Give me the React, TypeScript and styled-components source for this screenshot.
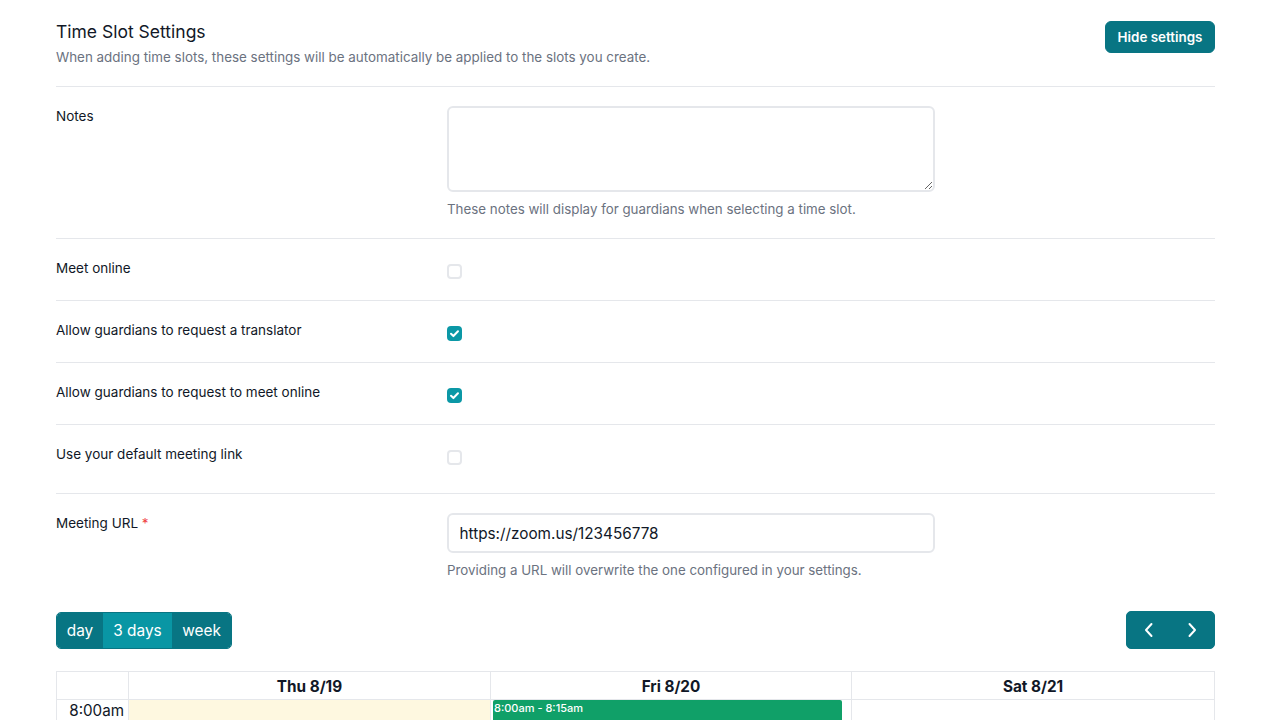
import React from 'react';
import styled, { createGlobalStyle } from 'styled-components';

const GlobalStyle = createGlobalStyle`
  html, body {
    margin: 0;
    padding: 0;
    height: 720px;
    overflow: hidden;
    background: #fff;
    font-family: Inter, "Liberation Sans", sans-serif;
    color: #111827;
  }
  * {
    box-sizing: border-box;
  }
`;

const App: React.FC<{}> = () => {
  return (
    <Page>
      <GlobalStyle />
      <Header>
        <div>
          <Title>Time Slot Settings</Title>
          <Subtitle>
            When adding time slots, these settings will be automatically be applied to the slots you
            create.
          </Subtitle>
        </div>
        <PrimaryButton>Hide settings</PrimaryButton>
      </Header>

      <Row $height={152}>
        <Label>Notes</Label>
        <div>
          <TextArea />
          <Help>These notes will display for guardians when selecting a time slot.</Help>
        </div>
      </Row>
      <CheckRow label="Meet online" checked={false} />
      <CheckRow label="Allow guardians to request a translator" checked />
      <CheckRow label="Allow guardians to request to meet online" checked />
      <CheckRow label="Use your default meeting link" checked={false} height={69} />
      <Row $height={118} $last>
        <Label>
          Meeting URL <Required>*</Required>
        </Label>
        <div>
          <TextInput defaultValue="https://zoom.us/123456778" />
          <Help>Providing a URL will overwrite the one configured in your settings.</Help>
        </div>
      </Row>

      <Toolbar>
        <ViewGroup>
          <ViewButton $width={46}>day</ViewButton>
          <ViewButton $width={69} $active>
            3 days
          </ViewButton>
          <ViewButton $width={59}>week</ViewButton>
        </ViewGroup>
        <NavGroup>
          <NavButton aria-label="Previous">
            <Chevron d="M10.5 3 L5 9 L10.5 15" />
          </NavButton>
          <NavButton aria-label="Next">
            <Chevron d="M5.5 3 L11 9 L5.5 15" />
          </NavButton>
        </NavGroup>
      </Toolbar>

      <Calendar>
        <thead>
          <tr>
            <CornerCell />
            <DayHead $width={362}>Thu 8/19</DayHead>
            <DayHead $width={361}>Fri 8/20</DayHead>
            <DayHead $width={363}>Sat 8/21</DayHead>
          </tr>
        </thead>
        <tbody>
          <tr>
            <TimeCell>8:00am</TimeCell>
            <SlotCell $today />
            <SlotCell>
              <Event>8:00am - 8:15am</Event>
            </SlotCell>
            <SlotCell />
          </tr>
        </tbody>
      </Calendar>
    </Page>
  );
};

const Chevron: React.FC<{ d: string }> = ({ d }) => (
  <svg width="16" height="18" viewBox="0 0 16 18" fill="none">
    <path d={d} stroke="#fff" strokeWidth="2" strokeLinecap="round" strokeLinejoin="round" />
  </svg>
);

const CheckRow: React.FC<{ label: string; checked: boolean; height?: number }> = ({
  label,
  checked,
  height = 62,
}) => (
  <Row $height={height}>
    <Label>{label}</Label>
    <CheckBox $checked={checked}>
      {checked && (
        <svg width="11" height="11" viewBox="0 0 12 12" fill="none">
          <path
            d="M2.2 6.3 L4.8 8.8 L9.8 3.6"
            stroke="#fff"
            strokeWidth="2.2"
            strokeLinecap="round"
            strokeLinejoin="round"
          />
        </svg>
      )}
    </CheckBox>
  </Row>
);

export default App;

const Page = styled.div`
  width: 1270px;
  height: 720px;
  overflow: hidden;
  padding: 21px 55px 0 56px;
`;

const Header = styled.div`
  display: flex;
  justify-content: space-between;
  align-items: flex-start;
  height: 66px;
  border-bottom: 1px solid #e5e7eb;
`;

const Title = styled.h3`
  margin: 0;
  font-size: 17.5px;
  line-height: 22px;
  font-weight: 400;
  color: #111827;
`;

const Subtitle = styled.p`
  margin: 4px 0 0;
  font-size: 13.4px;
  line-height: 20px;
  color: #6b7280;
`;

const PrimaryButton = styled.button`
  height: 32px;
  width: 110px;
  padding: 0;
  border: 1px solid #087583;
  border-radius: 6px;
  background: #087583;
  color: #fff;
  font-family: inherit;
  font-size: 13.4px;
  font-weight: 600;
`;

const Row = styled.div<{ $height: number; $last?: boolean }>`
  display: grid;
  grid-template-columns: 391px 488px;
  align-items: start;
  height: ${(p) => p.$height}px;
  padding-top: 19px;
  border-bottom: ${(p) => (p.$last ? 'none' : '1px solid #e5e7eb')};
`;

const Label = styled.label`
  font-size: 13.5px;
  line-height: 20px;
  color: #111827;
`;

const Required = styled.span`
  color: #ef4444;
`;

const TextArea = styled.textarea`
  display: block;
  width: 488px;
  height: 86px;
  border: 2px solid #e5e7eb;
  border-radius: 6px;
  background: #fff;
  outline: none;
`;

const TextInput = styled.input`
  display: block;
  width: 488px;
  height: 40px;
  padding: 0 10.5px;
  border: 2px solid #e5e7eb;
  border-radius: 6px;
  font-family: inherit;
  font-size: 15.3px;
  color: #111827;
  outline: none;
`;

const Help = styled.p`
  margin: 7px 0 0;
  font-size: 13.33px;
  line-height: 20px;
  color: #6b7280;
`;

const CheckBox = styled.span<{ $checked: boolean }>`
  display: flex;
  align-items: center;
  justify-content: center;
  width: 15px;
  height: 15px;
  margin-top: 6px;
  border-radius: 4px;
  border: ${(p) => (p.$checked ? 'none' : '2px solid #e5e7eb')};
  background: ${(p) => (p.$checked ? '#0b98a6' : '#fff')};
`;

const Toolbar = styled.div`
  display: flex;
  justify-content: space-between;
  align-items: flex-start;
  height: 59px;
`;

const ViewGroup = styled.div`
  display: flex;
  height: 37px;
  border: 1px solid #087583;
  border-radius: 5px;
  overflow: hidden;
`;

const ViewButton = styled.button<{ $active?: boolean; $width: number }>`
  width: ${(p) => p.$width}px;
  padding: 0;
  border: none;
  background: ${(p) => (p.$active ? '#0996a4' : '#087583')};
  color: #fff;
  font-family: inherit;
  font-size: 15.4px;
`;

const NavGroup = styled.div`
  display: flex;
  width: 89px;
  height: 38px;
  margin-top: -1px;
  border-radius: 5px;
  border: 1px solid #087583;
  background: #087583;
  overflow: hidden;
`;

const NavButton = styled.button`
  flex: 1;
  display: flex;
  align-items: center;
  justify-content: center;
  padding: 0;
  border: none;
  background: transparent;
`;

const Calendar = styled.table`
  width: 1158px;
  table-layout: fixed;
  border-collapse: collapse;
  border: 1px solid #e5e7eb;
`;

const CornerCell = styled.th`
  width: 72px;
  height: 28px;
  border: 1px solid #e5e7eb;
`;

const DayHead = styled.th<{ $width: number }>`
  width: ${(p) => p.$width}px;
  height: 28px;
  padding: 1px 0 0;
  border: 1px solid #e5e7eb;
  font-size: 15.3px;
  font-weight: 700;
  color: #111827;
`;

const TimeCell = styled.td`
  height: 40px;
  padding: 1px 4px 0 0;
  border: 1px solid #e5e7eb;
  text-align: right;
  vertical-align: top;
  font-size: 15.2px;
  line-height: 20px;
  color: #111827;
`;

const SlotCell = styled.td<{ $today?: boolean }>`
  height: 40px;
  padding: 0;
  border: 1px solid #e5e7eb;
  vertical-align: top;
  background: ${(p) => (p.$today ? '#fef8e0' : '#fff')};
`;

const Event = styled.div`
  width: 349px;
  height: 40px;
  margin: 0 0 0 2px;
  padding: 0 1px;
  border-radius: 2px;
  background: #10a068;
  color: #fff;
  font-size: 11px;
  font-weight: 500;
  line-height: 16px;
`;
